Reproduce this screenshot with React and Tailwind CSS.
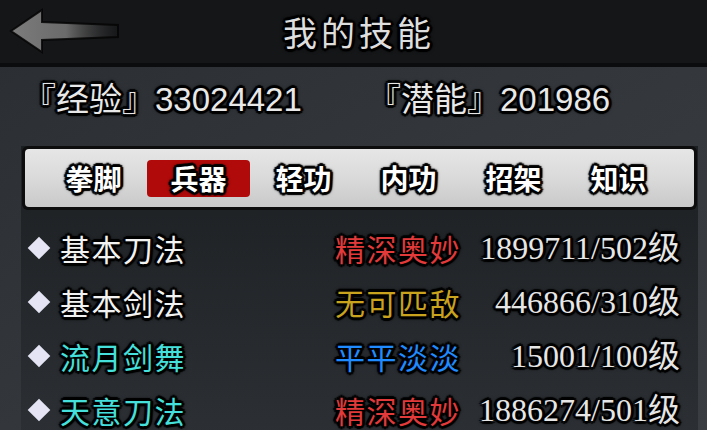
import React from 'react';

const OUTLINE =
  '[text-shadow:-2px_-2px_1px_#000,2px_-2px_1px_#000,-2px_2px_1px_#000,2px_2px_1px_#000,0_-3px_1px_#000,0_3px_1px_#000,-3px_0_1px_#000,3px_0_1px_#000,0_0_5px_#000]';

const tabs = ['拳脚', '兵器', '轻功', '内功', '招架', '知识'];

const skills = [
  { name: '基本刀法', nameColor: 'text-[#f2f2f2]', rank: '精深奥妙', rankColor: 'text-[#e23a3a]', value: '1899711/502级' },
  { name: '基本剑法', nameColor: 'text-[#f2f2f2]', rank: '无可匹敌', rankColor: 'text-[#c9a21e]', value: '446866/310级' },
  { name: '流月剑舞', nameColor: 'text-[#45e0dc]', rank: '平平淡淡', rankColor: 'text-[#1f8bff]', value: '15001/100级' },
  { name: '天意刀法', nameColor: 'text-[#45e0dc]', rank: '精深奥妙', rankColor: 'text-[#e23a3a]', value: '1886274/501级' },
];

function BackArrow() {
  return (
    <svg width="120" height="63" viewBox="0 0 120 63">
      <defs>
        <linearGradient id="arrowFill" x1="12" y1="0" x2="120" y2="0" gradientUnits="userSpaceOnUse">
          <stop offset="0" stopColor="#7c7c7c" />
          <stop offset="0.5" stopColor="#6a6a6a" />
          <stop offset="1" stopColor="#3a3a3a" stopOpacity="0" />
        </linearGradient>
      </defs>
      <path
        d="M11 31 L42 10 L42 22 L118 25 L118 37 L42 40 L42 52 Z"
        fill="url(#arrowFill)"
        stroke="#050505"
        strokeOpacity="0.85"
        strokeWidth="2"
      />
    </svg>
  );
}

export default function App() {
  return (
    <div className="w-[707px] h-[430px] overflow-hidden flex flex-col bg-gradient-to-br from-[#2a2e32] via-[#33373b] to-[#3a3e42] font-['Noto_Sans_CJK_SC',sans-serif]">
      {/* Header */}
      <div className="h-[67px] shrink-0 flex items-center bg-[#151618] border-b-[4px] border-[#0b0c0d]">
        <BackArrow />
        <h1 className={`ml-[163px] text-[34px] leading-none tracking-[4px] text-[#dedede] font-normal ${OUTLINE}`}>
          我的技能
        </h1>
      </div>

      {/* Stats */}
      <div className={`h-[79px] shrink-0 flex items-start pt-[13px] pl-[23px] text-[33px] leading-[40px] text-[#e8e8e8] font-['Liberation_Sans','Noto_Sans_CJK_SC',sans-serif] ${OUTLINE}`}>
        <span className="w-[345px]">『经验』33024421</span>
        <span>『潜能』201986</span>
      </div>

      {/* Panel */}
      <div className="flex-1 mx-[21px] mr-[9px] bg-gradient-to-b from-[#1c1f22] to-[#2c3034]">
        <div className="mx-[1px] rounded-[6px] bg-[#0d0d0e] p-[3px]">
          <div className="h-[58px] rounded-[4px] bg-gradient-to-b from-[#e6e6e6] via-[#dadada] to-[#c9c9c9] flex items-center pl-[16px]">
            {tabs.map((t, i) => (
              <div key={t} className="w-[105px] h-[37px] flex items-center justify-center">
                <div
                  className={`w-[103px] h-[37px] rounded-[4px] flex items-center justify-center text-[28px] leading-none font-bold text-white ${OUTLINE} ${
                    i === 1 ? 'bg-[#b00a0a]' : ''
                  }`}
                >
                  {t}
                </div>
              </div>
            ))}
          </div>
        </div>

        <div className="pt-[11px]">
          {skills.map((s) => (
            <div key={s.name} className="h-[54px] flex items-center pl-[6px] pr-[18px]">
              <div className="w-[23px] h-[23px] flex items-center justify-center">
                <div className="w-[16px] h-[16px] rotate-45 bg-[#e4e4f4]" />
              </div>
              <div className={`ml-[10px] w-[275px] text-[30px] leading-none tracking-[1.5px] ${s.nameColor} ${OUTLINE}`}>
                {s.name}
              </div>
              <div className={`text-[30px] leading-none tracking-[1.5px] ${s.rankColor} ${OUTLINE}`}>{s.rank}</div>
              <div
                className={`flex-1 text-right text-[32px] leading-none text-[#e6e6e6] font-['Liberation_Serif','Noto_Sans_CJK_SC',serif] ${OUTLINE}`}
              >
                {s.value}
              </div>
            </div>
          ))}
        </div>
      </div>
    </div>
  );
}
